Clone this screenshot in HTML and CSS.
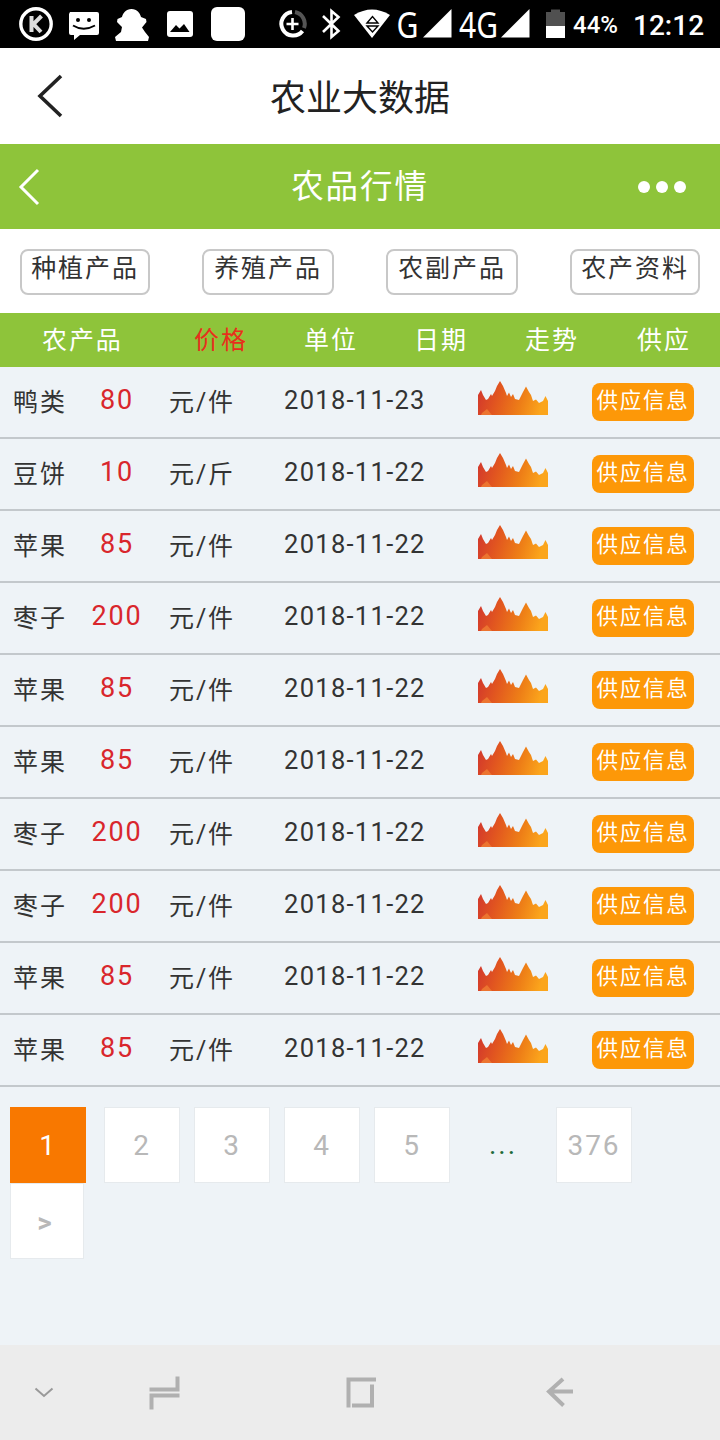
FILE: index.html
```html
<!doctype html>
<html lang="zh-CN">
  <head>
    <meta charset="utf-8">
    <title>农业大数据</title>
    <meta name="viewport" content="width=device-width, initial-scale=1">
    <link rel="stylesheet" href="styles.css">
  </head>
  <body>

    <!-- shared gradient + trend icon -->
    <svg class="defs" width="0" height="0">
      <defs>
        <linearGradient id="fire" x1="0" y1="0" x2="1" y2="0.15">
          <stop offset="0" stop-color="#d0342e"/>
          <stop offset="0.35" stop-color="#e2571f"/>
          <stop offset="0.7" stop-color="#ee7f17"/>
          <stop offset="1" stop-color="#fba51c"/>
        </linearGradient>
        <symbol id="trend" viewBox="0 0 70 34">
          <path fill="url(#fire)" d="M0 14L3 9L5 14L8 19L10 18L13 13L14 15L17 10L19 5L22 0L25 5L28 12L29 15L31 11.500L33 16L35 13L37 18L41 19L43 15L45 11L48 5.500L51 11L53 14L55 20L58 18.500L61 22L65 20L67.500 15L70 20V34H0Z"/>
          <path fill="#ec7430" d="M4 32L9 28L14 34H3Z"/>
        </symbol>
      </defs>
    </svg>

    <div class="statusbar">
      <div class="notices">
        <svg width="36" height="36" viewBox="0 0 36 36"><circle cx="18" cy="18" r="15.200" fill="none" stroke="#fff" stroke-width="3.400"/><path d="M13.500 10V26M23.500 10L15.500 18L23 26" fill="none" stroke="#ddd" stroke-width="4"/></svg>
        <svg width="36" height="36" viewBox="0 0 36 36"><path fill="#fff" d="M4 6H31a2 2 0 0 1 2 2V27a2 2 0 0 1-2 2H14L8 34V29H5a2 2 0 0 1-2-2V8Z"/><circle cx="12" cy="14" r="2"/><circle cx="23" cy="14" r="2"/><path d="M7 19.500Q17.500 26 29 19.500" fill="none" stroke="#000" stroke-width="2"/></svg>
        <svg width="36" height="36" viewBox="0 0 36 36"><path fill="#fff" d="M17.500 3C23 3 26 7 27 11L32 13L32.500 16L28 21.500L31 26L35 31L34 35H2L1 31L7 26L8 21L3 16L3.500 13L8 11C9 7 12 3 17.500 3Z"/></svg>
        <svg width="36" height="36" viewBox="0 0 36 36"><rect x="5" y="5" width="26" height="26" rx="3" fill="#fff"/><path d="M8 26L14 19L17.500 22.500L22 18L27.500 26Z"/></svg>
        <svg width="36" height="36" viewBox="0 0 36 36"><rect x="1" y="1" width="34" height="34" rx="6" fill="#fff"/></svg>
      </div>
      <div class="signals">
        <svg width="32" height="36" viewBox="276 6 32 36"><path d="M292 12A11.800 11.800 0 1 0 302.500 31" fill="none" stroke="#fff" stroke-width="4"/><path d="M295 12A12 12 0 0 1 304 28" fill="none" stroke="#555" stroke-width="4"/><path d="M292.500 18V30M286.500 24H298.500" stroke="#fff" stroke-width="2.600"/></svg>
        <svg width="30" height="36" viewBox="315 6 30 36"><path d="M323 16L338.500 31L331.500 37V11L338.500 17L323 32" fill="none" stroke="#fff" stroke-width="2.600"/></svg>
        <svg width="46" height="36" viewBox="349 6 46 36"><path fill="#fff" d="M354 15Q372 4 390 15L372 38Z"/><path d="M367 23L372.500 16.500L378 23ZM367 26L372.500 32L378 26Z" fill="none" stroke="#000" stroke-width="1.400"/></svg>
        <svg class="net" width="60" height="48" viewBox="395 0 60 48"><text x="396.500" y="37.500" textLength="22" lengthAdjust="spacingAndGlyphs">G</text><path d="M423 37.500L451.500 9V37.500Z"/></svg>
        <svg class="net" width="78" height="48" viewBox="457 0 78 48"><text x="459" y="37.500" textLength="39" lengthAdjust="spacingAndGlyphs">4G</text><path d="M501 37.500L529.500 9V37.500Z"/></svg>
        <svg width="28" height="36" viewBox="540 6 28 36"><path fill="#505050" d="M546 12H551V9.500H560V12H565V26H546Z"/><path fill="#fff" d="M546 26H565V38H546Z"/></svg>
        <span class="battery">44%</span>
        <span class="clock">12:12</span>
      </div>
    </div>

    <header class="appbar">
      <svg class="back" width="28" height="44" viewBox="0 0 28 44"><path d="M26 2L5 22L26 42"/></svg>
      <h1>农业大数据</h1>
    </header>

    <div class="titlebar">
      <svg class="back" width="22" height="38" viewBox="0 0 22 38"><path d="M20 2L3 19L20 36"/></svg>
      <h2>农品行情</h2>
      <div class="more"><i></i><i></i><i></i></div>
    </div>

    <nav class="filters">
      <a>种植产品</a>
      <a class="wide">养殖产品</a>
      <a class="wide">农副产品</a>
      <a>农产资料</a>
    </nav>

    <main>
      <div class="thead">
        <span>农产品</span>
        <span class="sorted">价格</span>
        <span>单位</span>
        <span>日期</span>
        <span>走势</span>
        <span>供应</span>
      </div>

      <div class="row"><span>鸭类</span><b>80</b><span>元/件</span><time>2018-11-23</time><svg class="trend"><use href="#trend"/></svg><a class="supply">供应信息</a></div>
      <div class="row"><span>豆饼</span><b>10</b><span>元/斤</span><time>2018-11-22</time><svg class="trend"><use href="#trend"/></svg><a class="supply">供应信息</a></div>
      <div class="row"><span>苹果</span><b>85</b><span>元/件</span><time>2018-11-22</time><svg class="trend"><use href="#trend"/></svg><a class="supply">供应信息</a></div>
      <div class="row"><span>枣子</span><b>200</b><span>元/件</span><time>2018-11-22</time><svg class="trend"><use href="#trend"/></svg><a class="supply">供应信息</a></div>
      <div class="row"><span>苹果</span><b>85</b><span>元/件</span><time>2018-11-22</time><svg class="trend"><use href="#trend"/></svg><a class="supply">供应信息</a></div>
      <div class="row"><span>苹果</span><b>85</b><span>元/件</span><time>2018-11-22</time><svg class="trend"><use href="#trend"/></svg><a class="supply">供应信息</a></div>
      <div class="row"><span>枣子</span><b>200</b><span>元/件</span><time>2018-11-22</time><svg class="trend"><use href="#trend"/></svg><a class="supply">供应信息</a></div>
      <div class="row"><span>枣子</span><b>200</b><span>元/件</span><time>2018-11-22</time><svg class="trend"><use href="#trend"/></svg><a class="supply">供应信息</a></div>
      <div class="row"><span>苹果</span><b>85</b><span>元/件</span><time>2018-11-22</time><svg class="trend"><use href="#trend"/></svg><a class="supply">供应信息</a></div>
      <div class="row"><span>苹果</span><b>85</b><span>元/件</span><time>2018-11-22</time><svg class="trend"><use href="#trend"/></svg><a class="supply">供应信息</a></div>

      <div class="pages">
        <a class="current">1</a>
        <a>2</a>
        <a>3</a>
        <a>4</a>
        <a>5</a>
        <span>...</span>
        <a>376</a>
        <a class="next">&gt;</a>
      </div>
    </main>

    <footer class="navkeys">
      <svg width="24" height="40" viewBox="32 1372 24 40"><path d="M35.500 1387.500L44 1395L52.500 1387.500"/></svg>
      <svg width="36" height="40" viewBox="146 1372 36 40"><path d="M149.500 1388.500H177.500V1375.500M179.500 1394.500H151.500V1408.500"/></svg>
      <svg width="36" height="40" viewBox="344 1372 36 40"><path d="M376 1378.500H348.500V1406.500M352 1404.500H372V1383.500"/></svg>
      <svg width="32" height="40" viewBox="544 1372 32 40"><path d="M573 1390.500H549M563 1378L549 1390.500L563.500 1404.500"/></svg>
    </footer>

  </body>
</html>
```
FILE: styles.css
```css
* {
  box-sizing: border-box;
}
body {
  display: flex;
  flex-direction: column;
  height: 1440px;
  margin: 0;
  background-color: #eef3f7;
  color: #333;
  font-family: Roboto, "Noto Sans CJK SC", sans-serif;
  font-size: 25px;
  letter-spacing: 1.9px;
}
svg {
  display: block;
  flex: none;
}
h1, h2 {
  margin: 0;
  font-weight: normal;
}
.defs {
  position: absolute;
}

/* status bar */
.statusbar {
  display: flex;
  align-items: center;
  height: 48px;
  padding-left: 18px;
  background-color: #000;
  color: #fff;
  letter-spacing: 0;
}
.notices {
  display: flex;
  gap: 12px;
}
.signals {
  display: flex;
  align-items: center;
  margin-left: 30px;
}
.signals svg {
  margin-right: 2px;
}
.signals svg:nth-child(1) {
  margin-right: 7px;
}
.signals svg:nth-child(2) {
  margin-right: 4px;
}
.signals svg:nth-child(3) {
  margin-right: 0;
}
.signals svg:nth-child(5) {
  margin-right: 5px;
}
.net {
  overflow: visible;
  fill: #fff;
  font-family: "Noto Sans", sans-serif;
  font-size: 36px;
}
.battery {
  width: 61px;
  padding: 2px 0 0 3px;
  font-size: 24px;
  font-weight: 500;
}
.clock {
  padding: 2px 0 0 2px;
  font-size: 28px;
  font-weight: 500;
}

/* title bars */
.appbar, .titlebar {
  display: grid;
  grid-template-columns: 100px 1fr 100px;
  align-items: center;
  text-align: center;
}
.appbar {
  height: 96px;
  background-color: #fff;
  color: #222;
}
.appbar h1 {
  padding-bottom: 2px;
  font-size: 36px;
  letter-spacing: 0;
}
.back {
  fill: none;
  stroke: currentColor;
  stroke-width: 3.6;
}
.appbar .back {
  margin-left: 35px;
}
.titlebar {
  height: 85px;
  background-color: #8ec43a;
  color: #fff;
}
.titlebar .back {
  margin-left: 18px;
  stroke-width: 3;
}
.titlebar h2 {
  padding-bottom: 6px;
  font-size: 32.5px;
}
.more {
  display: flex;
  gap: 6px;
  margin-left: 18px;
}
.more i {
  width: 12px;
  height: 12px;
  border-radius: 50%;
  background-color: #fff;
}

/* category buttons */
.filters {
  display: flex;
  justify-content: space-between;
  height: 84px;
  padding: 20px 20px 0;
  background-color: #fff;
}
.filters a {
  width: 130px;
  height: 46px;
  border: 2px solid #c8c8c8;
  border-radius: 8px;
  line-height: 36px;
  text-align: center;
}
.filters .wide {
  width: 132px;
}

/* price list */
.thead {
  display: grid;
  grid-template-columns: 152px 110px 110px 111px 112px 1fr;
  height: 54px;
  padding-left: 42px;
  background-color: #8ec43a;
  color: #fff;
  line-height: 55px;
}
.sorted {
  color: #e8301c;
}
.row {
  display: grid;
  grid-template-columns: 64px 80px 127px 194px 114px 1fr;
  height: 72px;
  padding-left: 13px;
  border-bottom: 2px solid #c3c8cc;
  line-height: 72px;
}
.row b {
  color: #d9262c;
  font-size: 27px;
  font-weight: normal;
  line-height: 66px;
  text-align: center;
}
.row span:nth-child(3) {
  padding-left: 12px;
}
.row time {
  font-size: 25.5px;
  letter-spacing: 1.3px;
  line-height: 66px;
}
.trend {
  width: 70px;
  height: 34px;
  margin-top: 14px;
}
.supply {
  width: 102px;
  height: 38px;
  margin-top: 16px;
  border-radius: 8px;
  background-color: #fd9808;
  color: #fff;
  font-size: 21.5px;
  letter-spacing: 1.8px;
  line-height: 35px;
  text-align: center;
}

/* pagination */
.pages {
  display: flex;
  flex-wrap: wrap;
  padding: 20px 0 0 10px;
}
.pages a, .pages span {
  width: 76px;
  height: 76px;
  margin-right: 14px;
  border: 1px solid #e6eaed;
  background-color: #fff;
  color: #b8b8b8;
  font-size: 28px;
  letter-spacing: 2px;
  line-height: 75px;
  text-align: center;
}
.pages .current {
  margin-right: 18px;
  border-color: #f87800;
  background-color: #f87800;
  color: #fff;
}
.pages span {
  width: 78px;
  border: 0;
  background: none;
  color: #1d6b3a;
}
.pages .next {
  width: 74px;
  padding-right: 3px;
  font-weight: bold;
  line-height: 77px;
}

/* phone keys */
.navkeys {
  display: flex;
  align-items: center;
  height: 95px;
  margin-top: auto;
  padding-left: 32px;
  background-color: #ececec;
}
.navkeys path {
  fill: none;
  stroke: #b0b0b0;
  stroke-width: 4;
}
.navkeys svg:nth-child(1) path {
  stroke: #999;
  stroke-width: 2;
}
.navkeys svg:nth-child(2) {
  margin-left: 90px;
}
.navkeys svg:nth-child(3) {
  margin-left: 162px;
}
.navkeys svg:nth-child(4) {
  margin-left: 164px;
}
```
